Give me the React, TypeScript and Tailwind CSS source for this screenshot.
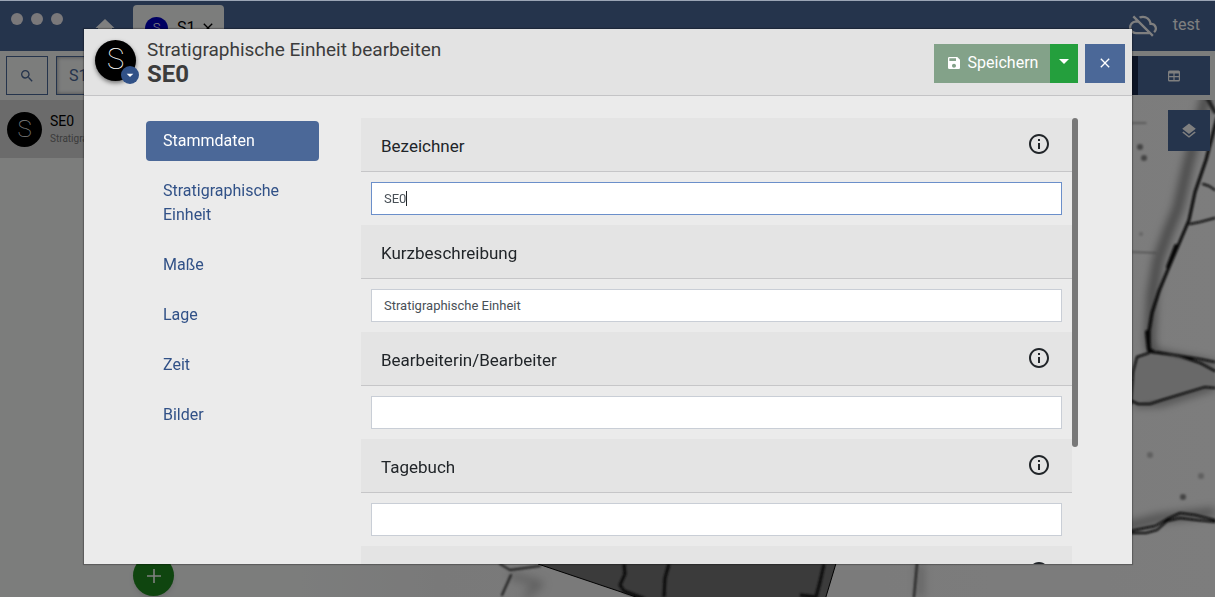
import React from "react";
import {
  MdArrowDropDown,
  MdClose,
  MdInfoOutline,
  MdLayers,
  MdOutlineCloudOff,
  MdSave,
  MdSearch,
} from "react-icons/md";

const groups = ["Stammdaten", "Stratigraphische Einheit", "Maße", "Lage", "Zeit", "Bilder"];

const fields = [
  { id: "identifier", label: "Bezeichner", value: "SE0", info: true, active: true },
  { id: "description", label: "Kurzbeschreibung", value: "Stratigraphische Einheit", info: false, active: false },
  { id: "processor", label: "Bearbeiterin/Bearbeiter", value: "", info: true, active: false },
  { id: "diary", label: "Tagebuch", value: "", info: true, active: false },
  { id: "extra", label: "", value: "", info: true, active: false },
];

function HomeIcon() {
  return (
    <svg viewBox="0 0 20 18" className="h-[18px] w-5" fill="currentColor" aria-hidden="true">
      <path d="M10 0 0.5 9H3v9h5v-6h4v6h5V9h2.5z" />
    </svg>
  );
}

function PlusIcon() {
  return (
    <svg viewBox="0 0 14 14" className="size-3.5" fill="none" stroke="currentColor" aria-hidden="true">
      <path d="M7 0v14M0 7h14" strokeWidth="1.6" />
    </svg>
  );
}

function TableIcon() {
  return (
    <svg viewBox="0 0 12 12" className="h-3 w-3" fill="currentColor" aria-hidden="true">
      <path
        fillRule="evenodd"
        d="M1.5 0.5h9A1.5 1.5 0 0 1 12 2v8a1.5 1.5 0 0 1-1.5 1.5h-9A1.5 1.5 0 0 1 0 10V2A1.5 1.5 0 0 1 1.5 0.5zM1.2 3.6v2.3h4.2V3.6zM6.6 3.6v2.3h4.2V3.6zM1.2 7.3v2.8h4.2V7.3zM6.6 7.3v2.8h4.2V7.3z"
      />
    </svg>
  );
}

function MapCanvas() {
  return (
    <svg
      className="absolute inset-0 h-full w-full"
      viewBox="0 0 915 497"
      preserveAspectRatio="xMaxYMin slice"
      aria-hidden="true"
    >
      <defs>
        <filter id="soft" x="-20%" y="-20%" width="140%" height="140%">
          <feGaussianBlur stdDeviation="1.1" />
        </filter>
        <filter id="haze" x="-50%" y="-50%" width="200%" height="200%">
          <feGaussianBlur stdDeviation="5" />
        </filter>
        <linearGradient id="ground" x1="0" x2="1">
          <stop offset="0" stopColor="#f8faf9" />
          <stop offset="0.15" stopColor="#f3f3f3" />
          <stop offset="1" stopColor="#fafafa" />
        </linearGradient>
      </defs>
      <rect width="915" height="497" fill="url(#ground)" />
      <g fill="none" stroke="#777" strokeLinejoin="round" filter="url(#haze)">
        <path d="M908 -10 888 65 878 108 868 132 858 160 852 195 850 240 852 252" strokeWidth="8" />
        <path d="M850 252 915 266M835 303 862 302 915 285M825 427 860 418 915 412" strokeWidth="6" />
        <path d="M210 475 240 484 225 497M620 464v33" strokeWidth="6" opacity="0.5" />
      </g>
      <path d="M836 256 848 252 915 268 915 287 870 296 834 303 832 275z" fill="#d2d2d2" filter="url(#soft)" />
      <g fill="none" stroke="#0c0c0c" strokeLinejoin="round" strokeLinecap="round" filter="url(#soft)">
        <path d="M917 18 906 60 895 92 889 120 878 146 869 167 859 191 852 213 849 231 849 249 854 252" strokeWidth="3" />
        <path d="M906 -4 915 12" strokeWidth="4" stroke="#444" />
        <path d="M876 146 868 167M847 232 849 250" strokeWidth="4" />
        <path d="M847 240 850 252 875 255 900 259 915 262M857 252 880 256 900 263 915 271" strokeWidth="2" />
        <path d="M903 84 909 86 915 90M890 124 900 122 915 118" strokeWidth="2" />
        <path d="M849 253 837 257 833 272 831 304M830 300 838 304 850 304 862 300 885 293 905 287 915 288" strokeWidth="2" />
        <path d="M826 433 846 433 857 430 867 421 880 418 896 420 915 422M830 431 855 426 867 419 880 413 895 415 915 420" strokeWidth="2" />
        <path d="M832 23h14M832 152 856 153" strokeWidth="1" stroke="#777" />
        <path d="M200 464 210 470 240 466M211 475 202 495M617 464 614 497" strokeWidth="2" stroke="#333" />
      </g>
      <g fill="#888" filter="url(#soft)">
        <circle cx="840" cy="47" r="3" />
        <circle cx="844" cy="58" r="3" />
        <circle cx="841" cy="134" r="2" opacity="0.4" />
        <circle cx="850" cy="355" r="3" opacity="0.5" />
        <circle cx="901" cy="376" r="3" opacity="0.5" />
        <circle cx="883" cy="397" r="3" />
      </g>
      <path d="M230 450 540 450 525 500 345 500 238 464z" fill="#767676" stroke="#000" strokeWidth="1" />
      <g fill="none" stroke="#161616" strokeLinejoin="round" filter="url(#soft)">
        <path d="M324 464 325 474 320 485 324 491 345 499M369 464 365 478 364 497M524 464 520 482 516 497 500 495" strokeWidth="3" />
      </g>
    </svg>
  );
}

function CategoryBadge({ className }: { className: string }) {
  return (
    <span className={`flex shrink-0 items-center justify-center rounded-full ${className}`}>S</span>
  );
}

function Workspace() {
  return (
    <div className="flex h-full flex-col bg-[#f8faf9]">
      <header className="flex h-[51px] shrink-0 items-start border-t border-[#9ba5b5] bg-[#4b6898] text-white">
        <div className="flex gap-2 pt-3 pl-[11px]">
          <span className="size-3 rounded-full bg-[#f4f0f4]" />
          <span className="size-3 rounded-full bg-[#f4f0f4]" />
          <span className="size-3 rounded-full bg-[#f4f0f4]" />
        </div>
        <a href="#home" aria-label="Start" className="mt-[18px] ml-8">
          <HomeIcon />
        </a>
        <div className="mt-1 ml-[18px] flex h-[46px] w-[91px] items-center rounded-t bg-[#f8faf9] pl-3 text-[16px] text-black">
          <CategoryBadge className="size-[23px] bg-[#0000c4] text-[13px] font-light text-white" />
          <span className="ml-[9px]">S1</span>
          <MdClose className="ml-1 size-4" />
        </div>
        <div className="ml-auto flex h-full items-center gap-4 pr-[15px] pb-0.5 text-[16px]">
          <MdOutlineCloudOff className="size-7" />
          <span>test</span>
        </div>
      </header>
      <div className="flex h-[49px] shrink-0 items-center gap-2 px-1.5 pr-[5px]">
        <button aria-label="Suchen" className="flex h-[39px] w-[42px] items-center justify-center border border-[#4b6898] text-[#4b6898]">
          <MdSearch className="size-4" />
        </button>
        <button className="h-[39px] w-60 border border-[#4b6898] pl-3 text-left text-[16px] text-[#4b6898] shadow-[inset_0_0_4px_rgba(0,0,0,0.4)]">S1</button>
        <div className="ml-auto flex">
          <button aria-label="Karte" className="h-[39px] w-[72px] bg-[#1b2a4c]" />
          <button aria-label="Liste" className="flex h-[39px] w-[72px] items-center justify-center bg-[#4b6898] text-white">
            <TableIcon />
          </button>
        </div>
      </div>
      <div className="flex min-h-0 flex-1">
        <aside className="flex w-[300px] shrink-0 flex-col">
          <div className="flex h-[58px] items-center gap-2 bg-[#d6d6d6] pl-[7px]">
            <CategoryBadge className="size-[35px] bg-black text-[24px] font-thin text-white" />
            <div className="text-[14px] leading-5 text-black">
              SE0
              <div className="text-[10px] leading-4 text-[#777]">Stratigraphische Einheit</div>
            </div>
          </div>
          <button aria-label="Ressource anlegen" className="mt-auto mb-px ml-[133px] flex size-[41px] items-center justify-center rounded-full bg-[#1f8a1f] text-white shadow-md">
            <PlusIcon />
          </button>
        </aside>
        <main className="relative flex-1 overflow-hidden">
          <MapCanvas />
          <button aria-label="Ebenen" className="absolute top-2.5 right-[5px] flex h-[41px] w-[42px] items-center justify-center bg-[#4b6898] text-white">
            <MdLayers className="size-[18px]" />
          </button>
        </main>
      </div>
    </div>
  );
}

function Editor() {
  return (
    <section role="dialog" aria-labelledby="editor-title" className="flex min-h-0 flex-1 flex-col bg-[#ebebeb] shadow-[0_0_1px_1px_rgba(0,0,0,0.25)]">
      <header className="flex h-[67px] shrink-0 items-center border-b border-[#c4c4c6] bg-[#e3e3e3] pr-[7px] pl-[11px]">
        <div className="relative mb-1">
          <CategoryBadge className="size-[41px] bg-black text-[29px] font-thin text-white shadow-[0_2px_4px_rgba(0,0,0,0.5)]" />
          <button aria-label="Kategorie wechseln" className="absolute -right-[3px] -bottom-[3px] flex size-[18px] items-center justify-center rounded-full bg-[#315187] text-white">
            <MdArrowDropDown className="size-4" />
          </button>
        </div>
        <h1 id="editor-title" className="ml-[11px] text-[19px] leading-6 text-[#3c3c3c]">
          Stratigraphische Einheit bearbeiten
          <strong className="block text-[24px] leading-6 font-bold">SE0</strong>
        </h1>
        <div className="mt-0.5 ml-auto flex h-[39px] text-[16px] text-white">
          <button className="flex w-[116px] items-center justify-center gap-1.5 bg-[#83a289]">
            <MdSave className="size-4" />
            Speichern
          </button>
          <button aria-label="Weitere Optionen" className="flex w-7 items-center justify-center bg-[#249f3d] pb-1">
            <MdArrowDropDown className="size-6" />
          </button>
          <button aria-label="Schließen" className="ml-[7px] flex w-10 items-center justify-center bg-[#4b6898]">
            <MdClose className="size-4" />
          </button>
        </div>
      </header>
      <div className="flex min-h-0 flex-1">
        <nav className="mt-[25px] ml-[62px] flex w-[173px] shrink-0 flex-col gap-2.5 text-[16px] leading-6">
          {groups.map((group, index) => (
            <button
              key={group}
              className={
                index === 0
                  ? "rounded bg-[#4b6898] px-[17px] py-2 text-left text-white"
                  : "rounded px-[17px] py-2 text-left text-[#315187]"
              }
            >
              {group}
            </button>
          ))}
        </nav>
        <div className="mt-[22px] mr-[54px] ml-[42px] flex min-w-0 flex-1">
          <form className="min-w-0 flex-1 overflow-y-auto [scrollbar-width:none]">
            {fields.map((field) => (
              <div key={field.id}>
                <div className="flex h-[54px] items-center justify-between border-b border-[#c6c6c8] bg-[#e4e4e4] pr-[21px] pl-5">
                  <label htmlFor={field.id} className="pt-[3px] text-[17px] leading-6 text-[#212529]">
                    {field.label}
                  </label>
                  {field.info && <MdInfoOutline className="mb-0.5 size-6 text-[#212529]" />}
                </div>
                <div className="h-[53px] p-2.5">
                  <div
                    className={
                      field.active
                        ? "relative flex h-[33px] items-center border border-[#6b8fca] bg-white"
                        : "relative flex h-[33px] items-center border border-[#c9ced6] bg-white"
                    }
                  >
                    <input
                      id={field.id}
                      defaultValue={field.value}
                      autoFocus={field.active}
                      className="h-full w-full bg-transparent px-3 text-[13px] text-[#495057] caret-transparent outline-none"
                    />
                    {field.active && <span className="absolute left-[34px] h-[15px] w-px bg-[#212529]" />}
                  </div>
                </div>
              </div>
            ))}
          </form>
          <div className="h-[329px] w-1.5 shrink-0 rounded-[3px] bg-[#787878]" />
        </div>
      </div>
    </section>
  );
}

export default function App() {
  return (
    <div className="relative h-screen overflow-hidden font-[Roboto,sans-serif]">
      <Workspace />
      <div className="absolute inset-x-0 top-px bottom-0 flex flex-col bg-black/50 pt-7 pr-[83px] pb-[33px] pl-[84px]">
        <Editor />
      </div>
    </div>
  );
}
